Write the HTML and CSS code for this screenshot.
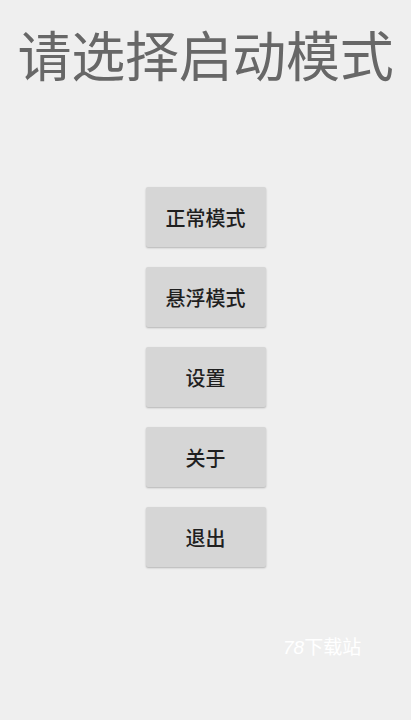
FILE: index.html
```html
<!DOCTYPE html>
<html lang="zh">
<head>
<meta charset="utf-8">
<link rel="stylesheet" href="styles.css">
</head>
<body>
<div class="screen">
  <h1 class="title">请选择启动模式</h1>
  <div class="menu">
    <button class="btn">正常模式</button>
    <button class="btn">悬浮模式</button>
    <button class="btn">设置</button>
    <button class="btn">关于</button>
    <button class="btn">退出</button>
  </div>
  <div class="mark"><span class="num">78</span>下载站</div>
</div>
</body>
</html>
```
FILE: styles.css
```css
html, body {
  margin: 0;
  padding: 0;
  background: #efefef;
}
.screen {
  width: 411px;
  height: 720px;
  position: relative;
  display: flex;
  flex-direction: column;
  align-items: center;
  font-family: "Noto Sans CJK SC", "Noto Sans", sans-serif;
}
.title {
  margin: 20px 0 0 0;
  font-size: 54px;
  font-weight: 400;
  line-height: 68px;
  color: #676767;
  letter-spacing: -0.3px;
}
.menu {
  margin-top: 99px;
  display: flex;
  flex-direction: column;
  gap: 20px;
}
.btn {
  width: 120px;
  height: 60px;
  margin: 0;
  border: none;
  border-radius: 2px;
  background: #d6d6d6;
  box-shadow: 0 1px 2px rgba(0,0,0,0.25);
  font-family: "Noto Sans CJK SC", sans-serif;
  font-size: 20px;
  font-weight: 500;
  color: #1f1f1f;
  padding: 0;
}
.mark {
  position: absolute;
  left: 283px;
  top: 632px;
  font-size: 19px;
  color: #ffffff;
  font-family: "Noto Sans CJK SC", sans-serif;
}
.num {
  font-style: italic;
  font-family: "Liberation Sans", sans-serif;
}
```
